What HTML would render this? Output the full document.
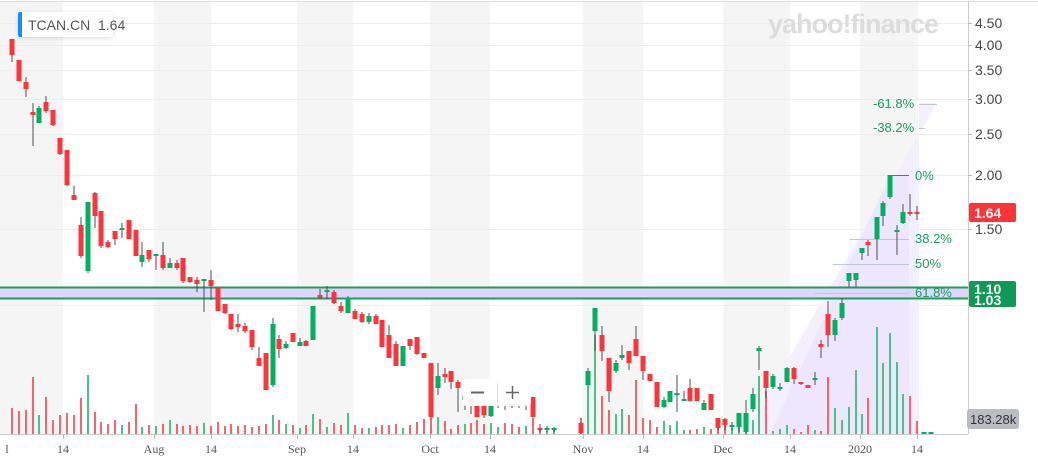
<!DOCTYPE html>
<html><head><meta charset="utf-8"><style>
html,body{margin:0;padding:0;background:#fff;}
body{width:1038px;height:462px;overflow:hidden;position:relative;font-family:"Liberation Sans",sans-serif;}
svg{position:absolute;left:0;top:0;}
</style></head><body>
<svg id="c" width="1038" height="462" xmlns="http://www.w3.org/2000/svg">
<g fill="#f5f5f5">
<rect x="0" y="2" width="63" height="432"/><rect x="154" y="2" width="57" height="432"/>
<rect x="297" y="2" width="56" height="432"/><rect x="430" y="2" width="60" height="432"/>
<rect x="583" y="2" width="60" height="432"/><rect x="723" y="2" width="67" height="432"/>
<rect x="860" y="2" width="58" height="432"/>
</g>
<line x1="0" y1="1.5" x2="1038" y2="1.5" stroke="#ddd"/>
<g stroke="#ececec" stroke-width="1">
<line x1="0" y1="23.5" x2="968" y2="23.5"/><line x1="0" y1="45.5" x2="968" y2="45.5"/>
<line x1="0" y1="70.5" x2="968" y2="70.5"/><line x1="0" y1="99.5" x2="968" y2="99.5"/>
<line x1="0" y1="134.5" x2="968" y2="134.5"/><line x1="0" y1="175.5" x2="968" y2="175.5"/>
<line x1="0" y1="229.5" x2="968" y2="229.5"/><line x1="0" y1="305.5" x2="968" y2="305.5"/>
</g>
<text x="768" y="33" font-size="27" font-weight="bold" fill="#dcdcdc" font-family="Liberation Sans,sans-serif" letter-spacing="-1">yahoo!finance</text>
<polygon points="745,434 937,103 919,103 919,434" fill="#f4effe"/>
<polygon points="770,434 890,175 909,175 909,434" fill="#ebe2fc" opacity="0.7"/>
<rect x="0" y="287" width="968" height="12" fill="#e2d5fb"/>
<line x1="0" y1="287.5" x2="968" y2="287.5" stroke="#1a9e5c" stroke-width="2"/>
<line x1="0" y1="298.5" x2="968" y2="298.5" stroke="#1a9e5c" stroke-width="2"/>
<g stroke="#b9c9d6" stroke-width="1">
<line x1="919" y1="104.5" x2="937" y2="104.5"/><line x1="919" y1="128.5" x2="925" y2="128.5"/>
<line x1="850" y1="239.5" x2="909" y2="239.5"/><line x1="833" y1="264.5" x2="909" y2="264.5"/>
<line x1="815" y1="293.5" x2="909" y2="293.5"/>
</g>
<line x1="890" y1="175.5" x2="909" y2="175.5" stroke="#1a9e5c"/>
<g font-size="13" fill="#16a05d" font-family="Liberation Sans,sans-serif">
<text x="873" y="108">-61.8%</text><text x="873" y="132">-38.2%</text>
<text x="915" y="180">0%</text><text x="915" y="243">38.2%</text>
<text x="915" y="268">50%</text><text x="915" y="297">61.8%</text>
</g>
<g id="vol"></g><g id="cand"></g>
<line x1="968.5" y1="2" x2="968.5" y2="434" stroke="#ccc"/>
<line x1="0" y1="434.5" x2="968" y2="434.5" stroke="#ccc"/>
<g stroke="#bbb">
<line x1="63.5" y1="434" x2="63.5" y2="439"/><line x1="154.5" y1="434" x2="154.5" y2="439"/>
<line x1="211.5" y1="434" x2="211.5" y2="439"/><line x1="297.5" y1="434" x2="297.5" y2="439"/>
<line x1="353.5" y1="434" x2="353.5" y2="439"/><line x1="430.5" y1="434" x2="430.5" y2="439"/>
<line x1="490.5" y1="434" x2="490.5" y2="439"/><line x1="583.5" y1="434" x2="583.5" y2="439"/>
<line x1="643.5" y1="434" x2="643.5" y2="439"/><line x1="723.5" y1="434" x2="723.5" y2="439"/>
<line x1="790.5" y1="434" x2="790.5" y2="439"/><line x1="860.5" y1="434" x2="860.5" y2="439"/>
<line x1="917.5" y1="434" x2="917.5" y2="439"/>
</g>
<g font-size="12" fill="#555" font-family="Liberation Serif,serif" text-anchor="middle">
<text x="7" y="453">l</text><text x="63" y="453">14</text><text x="154" y="453">Aug</text>
<text x="211" y="453">14</text><text x="297" y="453">Sep</text><text x="353" y="453">14</text>
<text x="430" y="453">Oct</text><text x="490" y="453">14</text><text x="583" y="453">Nov</text>
<text x="643" y="453">14</text><text x="723" y="453">Dec</text><text x="790" y="453">14</text>
<text x="860" y="453">2020</text><text x="917" y="453">14</text>
</g>
<g stroke="#bbb">
<line x1="968" y1="23.5" x2="972" y2="23.5"/><line x1="968" y1="45.5" x2="972" y2="45.5"/>
<line x1="968" y1="70.5" x2="972" y2="70.5"/><line x1="968" y1="99.5" x2="972" y2="99.5"/>
<line x1="968" y1="134.5" x2="972" y2="134.5"/><line x1="968" y1="175.5" x2="972" y2="175.5"/>
<line x1="968" y1="229.5" x2="972" y2="229.5"/>
</g>
<g font-size="14" fill="#444" font-family="Liberation Sans,sans-serif">
<text x="975" y="28">4.50</text><text x="975" y="50">4.00</text><text x="975" y="75">3.50</text>
<text x="975" y="104">3.00</text><text x="975" y="139">2.50</text><text x="975" y="180">2.00</text>
<text x="975" y="234">1.50</text>
</g>
<rect x="969" y="203" width="47" height="19" rx="2" fill="#ff333a"/>
<text x="974" y="218" font-size="14" fill="#fff" font-weight="bold">1.64</text>
<rect x="969" y="281" width="47" height="26" rx="2" fill="#0e9a55"/>
<text x="974" y="294" font-size="14" fill="#fff" font-weight="bold">1.10</text>
<text x="974" y="305" font-size="14" fill="#fff" font-weight="bold">1.03</text>
<rect x="967" y="409" width="52" height="20" rx="3" fill="#b9bcc2"/>
<text x="970" y="424" font-size="13" fill="#333">183.28k</text>
<rect x="463" y="379" width="68" height="27" rx="3" fill="#fff" opacity="0.92"/>
<line x1="471" y1="392.5" x2="484" y2="392.5" stroke="#666" stroke-width="2"/>
<line x1="497.5" y1="383" x2="497.5" y2="403" stroke="#ddd"/>
<line x1="506" y1="392.5" x2="519" y2="392.5" stroke="#666" stroke-width="1.5"/>
<line x1="512.5" y1="386" x2="512.5" y2="399" stroke="#666" stroke-width="1.5"/>
</svg>
<div style="position:absolute;left:18px;top:12px;width:95px;height:25px;background:#fff;border-radius:3px;box-shadow:0 1px 4px rgba(0,0,0,0.15);"></div>
<div style="position:absolute;left:18px;top:12px;width:4px;height:25px;background:#1a8cff;border-radius:2px 0 0 2px;"></div>
<div style="position:absolute;left:28px;top:17px;font-size:14px;color:#555;white-space:nowrap;">TCAN.CN&nbsp; 1.64</div>
<script>
var D=[
[12,39,55,39,62,'r',408],[19,60,81,60,81,'r',411],[26,82,89,77,97,'r',410],[33,112,115,103,146,'r',377],
[39,108,123,106,123,'g',415],[46,102,111,96,113,'r',397],[53,110,125,110,126,'r',420],[60,138,154,138,155,'r',415],
[67,150,185,150,186,'r',413],[74,195,200,186,200,'r',415],[81,225,256,217,258,'r',398],[88,202,271,202,273,'g',375],
[95,193,216,192,228,'r',412],[101,211,246,211,248,'r',422],[108,242,247,240,248,'r',424],[115,231,239,231,245,'r',420],
[122,228,230,223,238,'g',425],[129,220,239,220,239,'r',422],[136,230,256,230,256,'r',404],[142,255,262,242,267,'g',427],
[149,250,259,250,262,'r',425],[156,254,256,255,270,'g',426],[163,255,268,242,270,'r',424],[170,263,268,258,268,'g',420],
[177,263,268,260,270,'r',424],[183,258,281,258,283,'r',426],[190,277,282,277,283,'r',425],[197,280,284,277,292,'r',426],
[204,279,281,280,312,'g',423],[211,280,286,270,300,'r',426],[218,288,311,288,311,'r',422],[225,304,313,304,314,'r',426],
[231,314,329,314,330,'r',424],[238,324,327,314,332,'r',426],[245,326,331,323,333,'r',425],[252,330,347,330,350,'r',427],
[259,358,366,347,366,'r',426],[266,353,390,353,390,'r',424],[273,324,385,318,387,'g',415],[279,339,349,335,358,'r',420],
[286,344,348,341,349,'g',424],[293,333,342,333,342,'r',425],[300,342,346,338,346,'g',428],[306,341,346,340,346,'r',425],
[313,306,340,306,340,'g',414],[320,295,298,289,299,'r',419],[327,290,292,286,299,'g',427],[334,292,303,290,304,'r',423],
[341,306,311,302,313,'r',425],[348,298,313,296,313,'g',413],[355,311,319,309,319,'r',425],[362,314,322,312,323,'r',428],
[369,316,322,313,324,'g',428],[376,316,324,314,324,'r',427],[382,320,347,320,347,'r',425],[389,335,358,325,358,'r',425],
[396,344,366,341,366,'r',424],[403,346,366,346,366,'g',428],[410,339,346,339,350,'r',425],[417,337,354,337,355,'r',422],
[424,353,358,353,358,'r',419],[431,363,417,363,417,'r',412],[438,376,388,363,395,'g',417],[445,374,377,368,383,'r',421],
[451,371,382,371,389,'r',429],[458,382,388,380,412,'r',425],[465,396,400,392,410,'g',424],[471,398,406,397,414,'r',423],
[477,405,417,395,417,'r',420],[484,405,415,400,418,'r',424],[491,404,416,404,417,'g',423],[498,404,406,402,408,'g',427],
[505,404,406,402,410,'r',423],[512,404,406,402,408,'r',424],[519,404,406,402,408,'r',427],[526,404,406,402,410,'g',426],
[533,397,417,397,417,'r',418],[540,428,430,424,432,'r',430],[547,428,430,426,432,'g',431],[554,428,430,427,432,'g',430],
[581,423,433,422,434,'r',418],[588,371,385,368,385,'g',385],[595,308,331,308,351,'g',335],[602,335,351,326,361,'r',396],
[609,358,391,358,402,'r',410],[616,363,371,360,373,'g',414],[622,355,358,345,360,'g',409],[629,351,363,351,370,'r',415],
[636,339,356,326,356,'r',380],[643,356,371,356,380,'r',418],[650,374,381,374,381,'r',420],[657,382,407,382,407,'r',427],
[664,400,407,397,408,'g',421],[670,391,402,391,402,'g',425],[677,393,395,375,412,'g',421],[684,399,401,391,401,'g',430],
[690,388,401,379,401,'r',430],[697,388,401,388,401,'r',429],[704,403,410,400,410,'g',427],[711,394,410,394,410,'r',429],
[718,418,428,418,430,'r',419],[725,419,425,418,430,'r',420],[732,425,427,422,430,'g',428],[739,413,427,413,432,'g',416],
[746,413,432,400,434,'g',419],[753,394,409,388,412,'g',420],[759,348,351,346,370,'g',376],[766,371,388,371,398,'r',391],
[773,376,387,374,389,'g',431],[780,387,389,383,391,'g',429],[787,368,382,367,382,'g',425],[794,368,379,367,384,'r',429],
[801,382,384,382,385,'r',432],[808,385,388,385,388,'r',425],[815,378,380,372,385,'g',430],[821,344,347,340,358,'r',431],
[828,314,335,301,347,'r',377],[835,320,335,318,341,'g',408],[842,303,318,298,320,'g',420],[849,273,281,273,287,'g',407],
[856,273,280,273,287,'g',370],[862,248,253,248,260,'g',414],[868,242,245,240,256,'r',398],[877,217,239,217,260,'g',327],
[883,203,216,201,226,'g',363],[890,175,197,175,199,'g',333],[897,230,232,225,255,'g',362],[903,212,223,204,224,'g',394],
[910,212,214,194,216,'r',396],[917,212,214,206,220,'r',421],[924,432,434,432,434,'g',432],[931,432,434,432,434,'g',432]
];
var ns='http://www.w3.org/2000/svg',V=document.getElementById('vol'),C=document.getElementById('cand');
function R(p,x,y,w,h,f){var r=document.createElementNS(ns,'rect');r.setAttribute('x',x);r.setAttribute('y',y);r.setAttribute('width',w);r.setAttribute('height',Math.max(h,1));r.setAttribute('fill',f);p.appendChild(r);}
D.forEach(function(d){var x=d[0],col=d[5]=='r'?'#ff333a':'#00b061',vc=d[5]=='r'?'#f5656b':'#4cc28b';
R(V,x-1,d[6],2,434-d[6],vc);
R(C,x-0.5,d[3],1,d[4]-d[3],'#4a5058');
var h=d[2]-d[1];if(h<2){R(C,x-2.5,d[1],5,2,col);}else R(C,x-2.5,d[1],5,h,col);});
</script>
</body></html>
